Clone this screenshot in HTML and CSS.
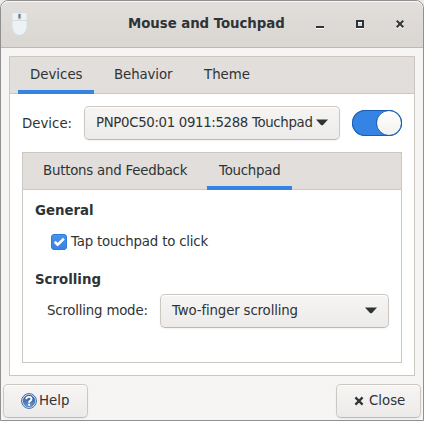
FILE: index.html
```html
<!DOCTYPE html>
<html lang="en">
<head>
<meta charset="utf-8">
<title>Mouse and Touchpad</title>
<link rel="stylesheet" href="styles.css">
</head>
<body>
<div class="window">
  <header class="titlebar">
    <svg class="mouse" width="18" height="26" viewBox="0 0 18 26">
      <path d="M2 3.500Q2 1.500 4 1.500H15Q17 1.500 17 3.500V17A7.500 7.500 0 0 1 2 17Z" fill="#eff2f4" stroke="#d6dfe4"/>
      <path d="M2.500 17.500A7 7 0 0 0 16.500 17.500" fill="none" stroke="#cfdae0"/>
      <path d="M2 9.500H17M9.500 2V4M9.500 8V9" stroke="#d3dde2" fill="none"/>
      <rect x="7.500" y="2" width="4" height="7" rx="1" fill="#dce2e5"/>
      <rect x="8.500" y="3" width="2" height="4.500" rx=".5" fill="#68757c"/>
    </svg>
    <h1>Mouse and Touchpad</h1>
    <div class="controls">
      <svg width="8" height="9" viewBox="0 0 8 9"><path d="M0 8H8V9H0Z" fill="#fff"/><path d="M0 6H8V8H0Z" fill="#2e3436"/></svg>
      <svg width="8" height="9" viewBox="0 0 8 9"><path d="M0 8H8V9H0ZM2 2H6V3H2Z" fill="#fff"/><path d="M0 0H8V8H0ZM2 2V6H6V2Z" fill="#2e3436" fill-rule="evenodd"/></svg>
      <svg width="8" height="9" viewBox="0 0 8 9"><path d="M.7 1.700L7.300 8.300M.7 8.300L7.300 1.700" stroke="#fff" stroke-width="2"/><path d="M.7 .7L7.300 7.300M.7 7.300L7.300 .7" stroke="#2e3436" stroke-width="2"/></svg>
    </div>
  </header>
  <main class="notebook outer">
    <nav class="tabs">
      <span class="tab active devices">Devices</span>
      <span class="tab behavior">Behavior</span>
      <span class="tab theme">Theme</span>
    </nav>
    <div class="page">
      <div class="device-row">
        <span class="label">Device:</span>
        <div class="button combo device"><span>PNP0C50:01 0911:5288 Touchpad</span><svg width="12" height="7" viewBox="0 0 12 7"><path d="M0 .5H12L7 6Q6 6.700 5 6Z" fill="#2e3436"/></svg></div>
        <div class="switch"><div class="knob"></div></div>
      </div>
      <section class="notebook inner">
        <nav class="tabs">
          <span class="tab buttons">Buttons and Feedback</span>
          <span class="tab active touchpad">Touchpad</span>
        </nav>
        <div class="settings">
          <h2>General</h2>
          <div class="check-row">
            <svg width="16" height="16" viewBox="0 0 16 16"><defs><linearGradient id="blue" x2="0" y2="1"><stop stop-color="#4a92ea"/><stop offset="1" stop-color="#3683e4"/></linearGradient></defs><rect x=".5" y=".5" width="15" height="15" rx="2.500" fill="url(#blue)" stroke="#2f7adb"/><path d="M3.700 7.800L6.700 10.600L12.900 4.600" fill="none" stroke="#fff" stroke-width="2.600"/></svg>
            <span>Tap touchpad to click</span>
          </div>
          <h2 class="second">Scrolling</h2>
          <div class="scroll-row">
            <span class="label">Scrolling mode:</span>
            <div class="button combo mode"><span>Two-finger scrolling</span><svg width="12" height="7" viewBox="0 0 12 7"><path d="M0 .5H12L7 6Q6 6.700 5 6Z" fill="#2e3436"/></svg></div>
          </div>
        </div>
      </section>
    </div>
  </main>
  <footer class="actions">
    <div class="button help">
      <svg width="16" height="16" viewBox="0 0 16 16"><defs><linearGradient id="orb" x2="0" y2="1"><stop stop-color="#2c4f87"/><stop offset="1" stop-color="#6d9bd2"/></linearGradient></defs><circle cx="8" cy="8" r="7.400" fill="#fff" stroke="#3463a4" stroke-width="1"/><circle cx="8" cy="8" r="6" fill="url(#orb)" stroke="#3465a4" stroke-width=".6"/><path d="M5.300 6.200Q5.300 3.900 8 3.900T10.500 6.100Q10.500 7.200 9.200 7.900Q8.100 8.500 8.100 9.700" fill="none" stroke="#fff" stroke-width="1.900"/><rect x="7.100" y="10.700" width="2" height="2" fill="#fff"/></svg>
      <span>Help</span>
    </div>
    <div class="button close">
      <svg width="10" height="10" viewBox="0 0 10 10"><path d="M1.400 1.400L8.600 8.600M1.400 8.600L8.600 1.400" stroke="#2e3436" stroke-width="2.200"/></svg>
      <span>Close</span>
    </div>
  </footer>
</div>
</body>
</html>
```
FILE: styles.css
```css
* { box-sizing: border-box; }
body {
  margin: 0;
  background: #ececec;
  color: #2e3436;
  font: 13.333px/16px "DejaVu Sans", sans-serif;
  white-space: nowrap;
}
svg { display: block; flex: none; }
.window {
  width: 424px;
  height: 421px;
  display: flex;
  flex-direction: column;
  border: 1px solid #919090;
  border-radius: 8px 8px 0 0;
  background: #f6f5f4;
  overflow: hidden;
}
.titlebar {
  flex: none;
  height: 47px;
  display: flex;
  align-items: center;
  padding: 0 19px 0 9px;
  border-bottom: 1px solid #bfb8b1;
  border-radius: 7px 7px 0 0;
  background: linear-gradient(#e1dedb, #dad6d2);
  box-shadow: inset 0 1px #f8f7f7;
}
h1 {
  margin: 0 0 0 100px;
  font-size: 13.333px;
  line-height: 16px;
  width: 157px;
  letter-spacing: -0.05px;
}
.controls { display: flex; gap: 32px; margin-left: auto; margin-top: 1px; }
.notebook { border: 1px solid #cdc7c2; background: #fff; }
.outer { flex: none; height: 320px; margin: 8px 8px 0; }
.tabs {
  height: 37px;
  display: flex;
  padding-left: 8px;
  background: #e1dedb;
  border-bottom: 1px solid #cdc7c2;
}
.tab { height: 37px; padding: 10px 12px 0; }
.active { border-bottom: 4px solid #3584e4; }
.devices { width: 76px; }
.behavior { width: 82px; margin-left: 8px; letter-spacing: -0.1px; }
.theme { margin-left: 8px; }
.page { padding: 12px; }
.device-row { height: 34px; display: flex; align-items: center; }
.device-row .label { width: 62px; margin-top: 2px; }
.button {
  height: 34px;
  display: flex;
  align-items: center;
  border: 1px solid #cdc7c2;
  border-bottom-color: #bfb8b1;
  border-radius: 5px;
  background: linear-gradient(#f6f5f4, #edebe9);
  box-shadow: inset 0 1px #fff, 0 1px 2px #0000000d;
}
.combo { justify-content: space-between; padding: 0 11px; }
.combo svg { margin-top: -1px; }
.device { width: 256px; }
.device span { letter-spacing: -0.34px; }
.switch {
  width: 50px;
  height: 26px;
  display: flex;
  justify-content: flex-end;
  margin-left: 12px;
  border-radius: 13px;
  background: #3584e4;
  box-shadow: inset 0 0 0 1px #185fb4;
}
.knob {
  width: 26px;
  height: 26px;
  border: 1px solid #185fb4;
  border-radius: 50%;
  background: linear-gradient(#fff, #f2f1f0);
}
.inner { height: 211px; margin-top: 12px; width: 380px; }
.buttons { width: 168px; letter-spacing: -0.22px; }
.touchpad { width: 85px; margin-left: 8px; letter-spacing: -0.25px; }
.settings { padding: 12px; }
h2 { margin: 0; font-size: 13.333px; line-height: 17px; height: 17px; }
.check-row { height: 24px; display: flex; align-items: center; gap: 4px; margin: 11px 0 0 16px; }
.check-row span { margin-top: -1px; letter-spacing: -0.2px; }
.second { margin-top: 17px; }
.scroll-row { height: 34px; display: flex; align-items: center; margin-top: 6px; padding-left: 12px; }
.scroll-row .label { width: 113px; margin-top: -1px; letter-spacing: -0.2px; }
.mode { width: 229px; letter-spacing: -0.15px; }
.actions { display: flex; justify-content: space-between; padding: 8px 2px 0; }
.help, .close { width: 85px; }
.help { padding-left: 17px; gap: 2px; }
.close { padding-left: 17px; gap: 5px; }
.close svg { margin-top: -1px; }
.close span, .help span { margin-top: -1px; }
```
